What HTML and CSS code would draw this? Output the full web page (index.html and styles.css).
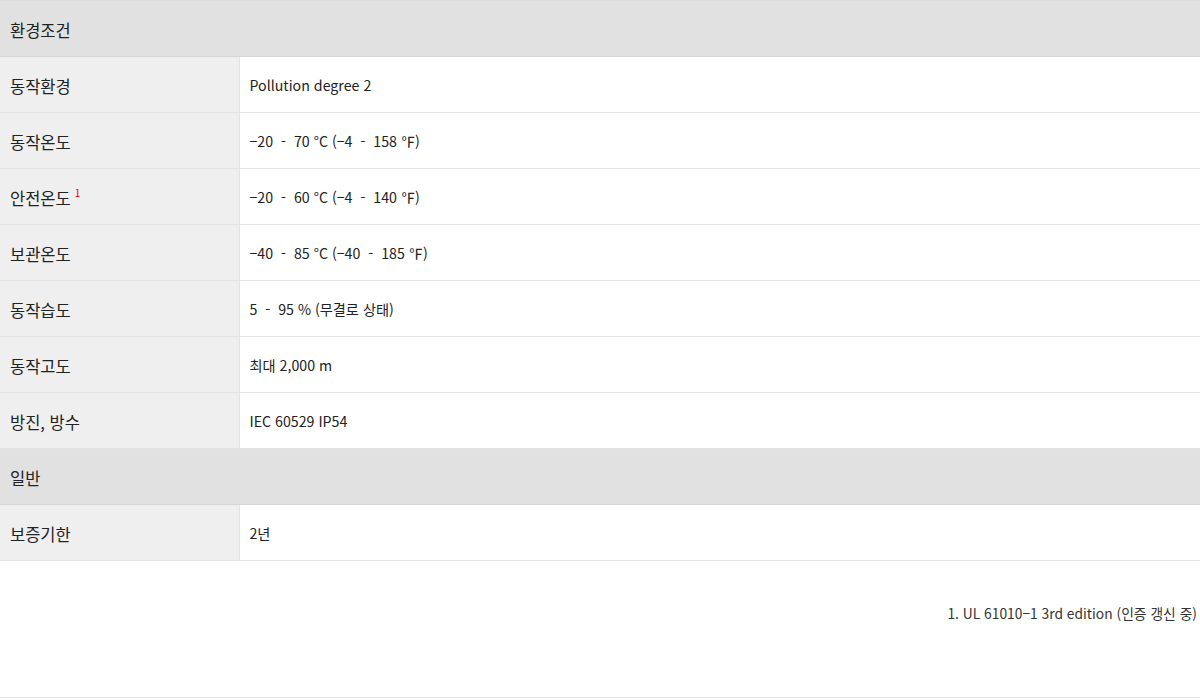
FILE: index.html
```html
<!DOCTYPE html>
<html lang="ko">
<head>
<meta charset="utf-8">
<link rel="stylesheet" href="styles.css">
</head>
<body>
<div class="page">
  <table class="spec">
    <tbody>
      <tr class="group"><th colspan="2">환경조건</th></tr>
      <tr><th>동작환경</th><td>Pollution degree 2</td></tr>
      <tr><th>동작온도</th><td>−20 &nbsp;-&nbsp; 70 °C (−4 &nbsp;-&nbsp; 158 ℉)</td></tr>
      <tr><th>안전온도<sup class="note">1</sup></th><td>−20 &nbsp;-&nbsp; 60 °C (−4 &nbsp;-&nbsp; 140 ℉)</td></tr>
      <tr><th>보관온도</th><td>−40 &nbsp;-&nbsp; 85 °C (−40 &nbsp;-&nbsp; 185 ℉)</td></tr>
      <tr><th>동작습도</th><td>5 &nbsp;-&nbsp; 95 % (무결로 상태)</td></tr>
      <tr><th>동작고도</th><td>최대 2,000 m</td></tr>
      <tr><th>방진, 방수</th><td>IEC 60529 IP54</td></tr>
      <tr class="group"><th colspan="2">일반</th></tr>
      <tr><th>보증기한</th><td>2년</td></tr>
    </tbody>
  </table>
  <p class="footnote">1. UL 61010−1 3rd edition (인증 갱신 중)</p>
</div>
</body>
</html>
```

FILE: styles.css
```css
html, body {
  margin: 0;
  padding: 0;
  background: #fff;
}
body {
  font-family: "Noto Sans CJK KR", "Noto Sans", sans-serif;
  color: #222;
}
.page {
  width: 1200px;
  height: 698px;
  border-bottom: 1px solid #e3e3e3;
  box-sizing: border-box;
}
.spec {
  width: 100%;
  border-collapse: collapse;
  border-top: 1px solid #dcdcdc;
}
.spec th,
.spec td {
  height: 56px;
  padding: 0 10px;
  border-bottom: 1px solid #e3e3e3;
  text-align: left;
  vertical-align: middle;
  box-sizing: border-box;
}
.spec th {
  width: 239px;
  background: #efefef;
  font-size: 16.5px;
  font-weight: 400;
  color: #222;
  border-right: 1px solid #e3e3e3;
  padding-top: 3px;
}
.spec td {
  font-size: 14.2px;
  color: #222;
  padding-top: 1px;
}
.spec tr.group th {
  background: #e1e1e1;
  border-right: none;
  border-bottom: 1px solid #d6d6d6;
}
.note {
  color: #e00000;
  font-size: 10px;
  margin-left: 4px;
  vertical-align: 8px;
  line-height: 0;
}
.footnote {
  margin: 0;
  padding: 42px 3px 0 0;
  text-align: right;
  font-size: 13.8px;
  color: #333;
}
```
